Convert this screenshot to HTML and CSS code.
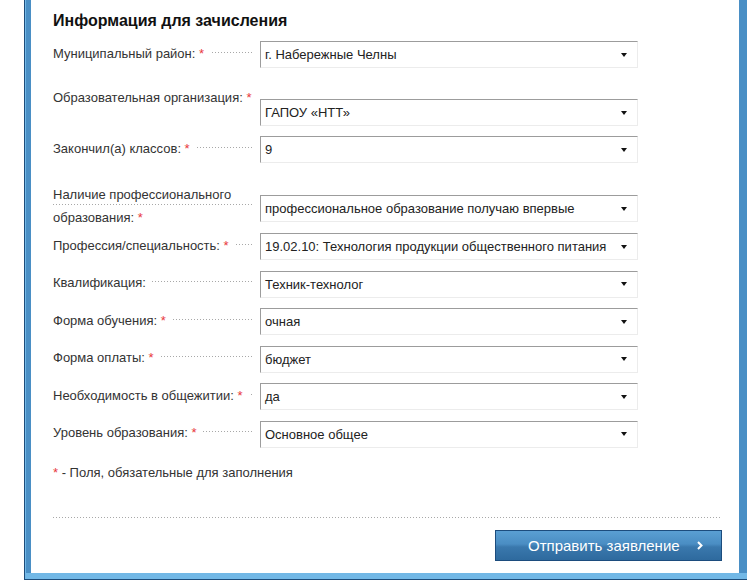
FILE: index.html
```html
<!DOCTYPE html>
<html lang="ru">
<head>
	<meta charset="UTF-8">
	<title>Информация для зачисления</title>
	<link rel="stylesheet" href="styles.css">
</head>
<body>
<div class="frame">
	<div class="panel">
		<form class="form">
			<h2 class="title">Информация для зачисления</h2>

			<div class="row">
				<label class="label"><span>Муниципальный район: <i class="req">*</i></span></label>
				<div class="select"><span>г. Набережные Челны</span><b class="arrow"></b></div>
			</div>
			<div class="row row-org">
				<label class="label"><span>Образовательная организация: <i class="req">*</i></span></label>
				<div class="select"><span>ГАПОУ «НТТ»</span><b class="arrow"></b></div>
			</div>
			<div class="row">
				<label class="label"><span>Закончил(а) классов: <i class="req">*</i></span></label>
				<div class="select"><span>9</span><b class="arrow"></b></div>
			</div>
			<div class="row row-two">
				<label class="label"><span>Наличие профессионального<br>образования: <i class="req">*</i></span></label>
				<div class="select"><span>профессиональное образование получаю впервые</span><b class="arrow"></b></div>
			</div>
			<div class="row">
				<label class="label"><span>Профессия/специальность: <i class="req">*</i></span></label>
				<div class="select"><span>19.02.10: Технология продукции общественного питания</span><b class="arrow"></b></div>
			</div>
			<div class="row">
				<label class="label"><span>Квалификация:</span></label>
				<div class="select"><span>Техник-технолог</span><b class="arrow"></b></div>
			</div>
			<div class="row">
				<label class="label"><span>Форма обучения: <i class="req">*</i></span></label>
				<div class="select"><span>очная</span><b class="arrow"></b></div>
			</div>
			<div class="row">
				<label class="label"><span>Форма оплаты: <i class="req">*</i></span></label>
				<div class="select"><span>бюджет</span><b class="arrow"></b></div>
			</div>
			<div class="row">
				<label class="label"><span>Необходимость в общежитии: <i class="req">*</i></span></label>
				<div class="select"><span>да</span><b class="arrow"></b></div>
			</div>
			<div class="row">
				<label class="label"><span>Уровень образования: <i class="req">*</i></span></label>
				<div class="select"><span>Основное общее</span><b class="arrow"></b></div>
			</div>

			<p class="note"><i class="req">*</i> - Поля, обязательные для заполнения</p>

			<div class="sep"></div>

			<div class="actions">
				<button type="button" class="send">
					<span>Отправить заявление</span>
					<svg class="chev" width="6" height="9" viewBox="0 0 6 9"><polyline points="1,1 4.5,4.5 1,8" fill="none" stroke="#fff" stroke-width="2"/></svg>
				</button>
			</div>
		</form>
	</div>
</div>
</body>
</html>
```

FILE: styles.css
```css
*{margin:0;padding:0;box-sizing:border-box;}
body{background:#fff;font-family:"Liberation Sans",Arial,sans-serif;font-size:13px;color:#333;overflow:hidden;}

/* рамка окна */
.frame{
	margin-left:24px;width:723px;
	border-left:1px solid #1d4c7a;border-bottom:1px solid #1d4c7a;
	background:#72b8e6;padding:0 0 6px 1px;
}
.panel{
	background:#fff;border-left:5px solid #4a8fc5;border-right:8px solid #4a8fc5;
	height:573px;
}
.form{padding:11px 17px 12px 22px;}

.title{font-size:16px;line-height:20px;font-weight:bold;color:#111;margin-bottom:10px;}

.row{display:flex;align-items:center;height:27px;}
.row + .row{margin-top:10.5px;}
.label{
	width:207px;line-height:23px;margin-bottom:3px;white-space:nowrap;
	background-image:repeating-linear-gradient(90deg,#a8a8a8 0 1px,transparent 1px 3px);
	background-size:200px 1px;background-repeat:no-repeat;background-position:0 calc(50% - 1px);
}
.label span{background:#fff;padding-right:6px;}
.req{font-style:normal;color:#e8383d;}

/* вторая строка — подпись сверху */
.row-org{height:47px;align-items:flex-start;}
.row-org .label{margin:7px 0 0;}
.row-org .select{margin-top:20.5px;}
.row-two{height:49px;align-items:flex-start;}
.row-two .label{margin:9px 0 0;}
.row-two .select{margin-top:21.5px;}

.select{
	width:378px;height:27px;display:flex;align-items:center;justify-content:space-between;
	padding:0 10px 0 4px;color:#222;white-space:nowrap;
	border:1px solid;border-color:#9c9c9c #ececec #ececec #9c9c9c;
}
.arrow{width:0;height:0;border-style:solid;border-width:4px 3.5px 0;border-color:#111 transparent transparent;flex:none;}

.note{margin-top:15px;line-height:20px;}
.sep{
	margin-top:34.5px;height:1px;
	background-image:repeating-linear-gradient(90deg,#a8a8a8 0 1px,transparent 1px 3px);
}
.actions{display:flex;justify-content:flex-end;margin-top:12px;}
.send{
	width:227px;height:31px;display:flex;align-items:center;
	padding:0 18px 0 32px;border:1px solid #1c4c7d;
	background:linear-gradient(#5a9fd3,#4a8dc3 45%,#3a78ad 55%,#2e6a9e);
	color:#fff;font-family:"Liberation Sans",Arial,sans-serif;font-size:15px;
}
.send .chev{margin-left:auto;}
```
